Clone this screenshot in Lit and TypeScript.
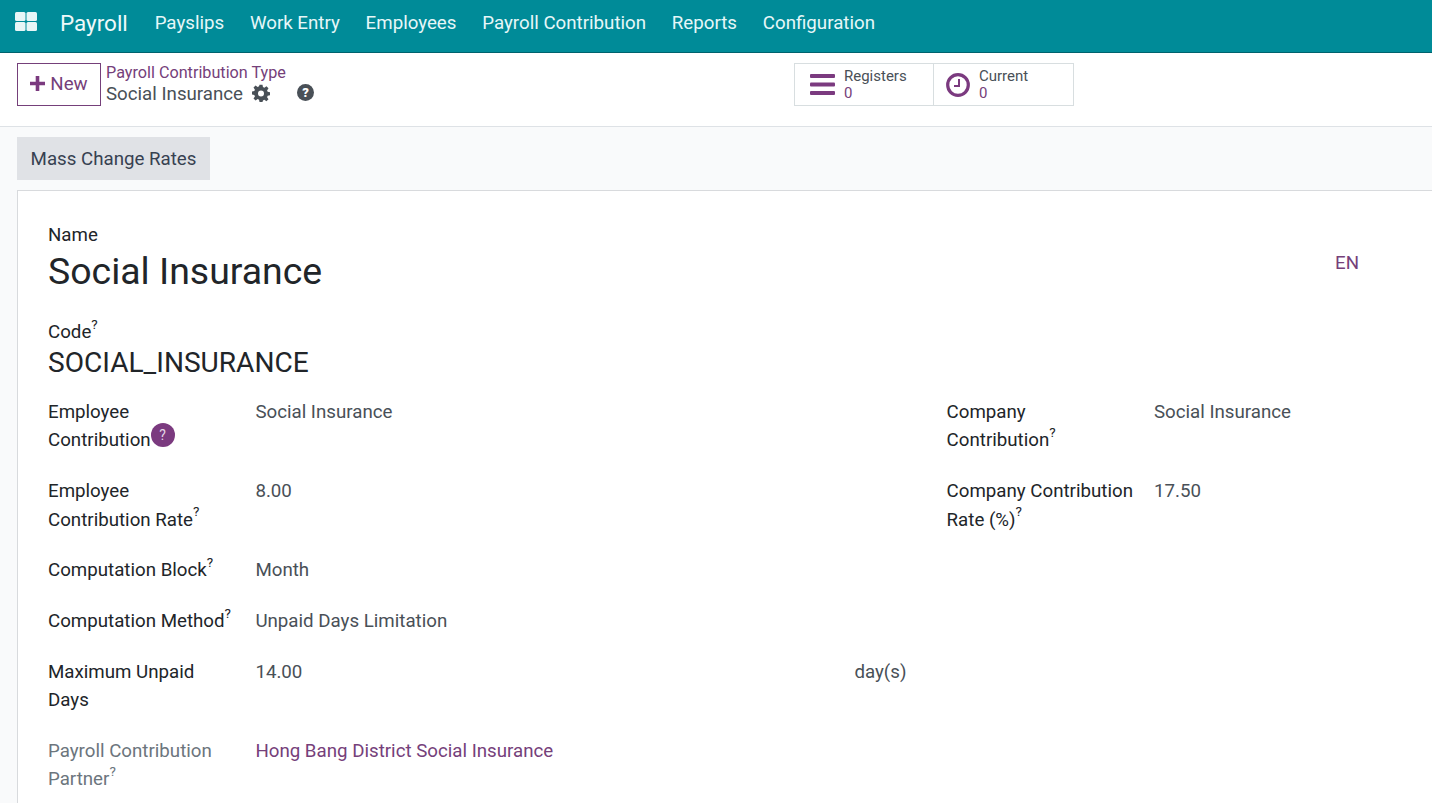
import { LitElement, html, css } from "lit";
import { customElement } from "lit/decorators.js";

const sup = html`<sup class="q">?</sup>`;

@customElement("app-root")
export class AppRoot extends LitElement {
  static styles = css`
    :host { display: block; width: 1432px; height: 803px; overflow: hidden; background: #f9fafb; font-family: Roboto, sans-serif; font-size: 18.72px; color: #212529; }
    * { box-sizing: border-box; }
    .nav { height: 53px; background: #008b98; border-bottom: 1px solid #00626d; display: flex; align-items: flex-start; color: #e6f7f8; }
    .apps { margin: 12px 0 0 15px; width: 22px; height: 19px; }
    .brand { margin: 8px 0 0 23px; font-size: 22.46px; line-height: 30px; color: #eef9fa; }
    .menu { display: flex; gap: 25.8px; margin: 9px 0 0 26.800px; line-height: 28px; }
    .cp { height: 74px; background: #fff; border-bottom: 1px solid #dee2e6; display: flex; padding: 10px 0 0 17px; }
    .new { width: 84px; height: 43px; border: 1px solid #75407a; color: #75407a; display: flex; align-items: center; justify-content: center; gap: 5px; padding-bottom: 2px; }
    .bc { margin-left: 5px; width: 184px; }
    .bc .t { font-size: 16.2px; color: #75407a; line-height: 18px; margin-top: 1px; white-space: nowrap; }
    .bc .c { display: flex; align-items: center; line-height: 24px; color: #495057; white-space: nowrap; }
    .bc svg { flex: none; }
    .gear { margin: 0 0 2px 9px; }
    .help { margin: 0 0 4px 27px; }
    .stats { display: flex; margin-left: 504px; height: 43px; }
    .stat { width: 140px; height: 43px; border: 1px solid #d8dee0; display: flex; padding-left: 15px; align-items: center; gap: 9px; }
    .stat + .stat { border-left: 0; padding-left: 12px; }
    .stat .n { font-size: 15px; line-height: 17px; color: #495057; }
    .stat .v { font-size: 15px; line-height: 17px; color: #75407a; }
    .actions { padding: 10px 0 10px 17px; height: 63px; }
    .mass { display: inline-flex; width: 193px; height: 43px; align-items: center; justify-content: center; background: #e0e2e6; color: #374151; }
    .sheet { margin-left: 17px; height: 700px; background: #fff; border: 1px solid #d8dadd; border-right: 0; padding: 30px 0 0 30px; position: relative; }
    .lab { line-height: 28px; }
    .name { font-size: 37.44px; line-height: 45px; }
    .en { position: absolute; right: 73px; top: 58px; color: #75407a; line-height: 28px; }
    .codelab { margin-top: 24px; line-height: 28px; }
    .code { font-size: 28.08px; line-height: 34px; }
    .q { font-size: 13.5px; line-height: 0; vertical-align: baseline; position: relative; top: -9.5px; }
    .grid { display: grid; grid-template-columns: 898.6px 1fr; margin-top: 18.2px; }
    .col { display: flex; flex-direction: column; gap: 22.5px; }
    .row { display: grid; grid-template-columns: 207.4px 1fr; line-height: 28.3px; }
    .v2 { color: #495057; display: flex; justify-content: space-between; width: 651px; }
    .muted { color: #6c757d; }
    .link { color: #75407a; }
    .badge { display: inline-flex; width: 24px; height: 24px; border-radius: 50%; background: #7b3a7f; color: #e4d6e6; font-size: 14px; align-items: center; justify-content: center; position: relative; top: -6.5px; line-height: 1; }
  `;

  render() {
    return html`
      <div class="nav">
        <svg class="apps" viewBox="0 0 22 19"><g fill="#e8f6f7"><rect x="0" y="0" width="10.500" height="9" rx="1.500"/><rect x="11.500" y="0" width="10.500" height="9" rx="1.500"/><rect x="0" y="10" width="10.500" height="9" rx="1.500"/><rect x="11.500" y="10" width="10.500" height="9" rx="1.500"/></g></svg>
        <div class="brand">Payroll</div>
        <div class="menu"><span>Payslips</span><span>Work Entry</span><span>Employees</span><span>Payroll Contribution</span><span>Reports</span><span>Configuration</span></div>
      </div>
      <div class="cp">
        <div class="new"><svg width="15" height="15" viewBox="0 0 15 15"><path d="M5.700 0h3.600v5.700H15v3.600H9.300V15H5.700V9.300H0V5.700h5.700z" fill="#7b3a7f"/></svg>New</div>
        <div class="bc">
          <div class="t">Payroll Contribution Type</div>
          <div class="c">Social Insurance
            <svg class="gear" width="18" height="18" viewBox="0 0 24 24"><path fill="#495057" fill-rule="evenodd" d="M10 1h4l.6 3.100 1.900.8L19.200 3 22 5.800l-1.900 2.700.8 1.900L24 11v4l-3.100.6-.8 1.900 1.900 2.700-2.800 2.800-2.700-1.900-1.900.8L14 24h-4l-.6-3.100-1.900-.8L4.800 22 2 19.200l1.900-2.700-.8-1.900L0 14v-4l3.100-.6.8-1.900L2 4.800 4.800 2l2.700 1.900 1.900-.8zM12 8.500a4 4 0 1 0 0 8 4 4 0 0 0 0-8z"/></svg>
            <svg class="help" width="17" height="17" viewBox="0 0 17 17"><circle cx="8.500" cy="8.500" r="8.500" fill="#495057"/><text x="8.500" y="13" text-anchor="middle" font-family="Roboto" font-weight="900" font-size="13" fill="#fff">?</text></svg>
          </div>
        </div>
        <div class="stats">
          <div class="stat"><svg width="25" height="21" viewBox="0 0 25 21"><g fill="#7b3a7f"><rect width="25" height="4" y="0" rx="1"/><rect width="25" height="4" y="8.500" rx="1"/><rect width="25" height="4" y="17" rx="1"/></g></svg><div><div class="n">Registers</div><div class="v">0</div></div></div>
          <div class="stat"><svg width="24" height="24" viewBox="0 0 24 24"><circle cx="12" cy="12" r="10.300" fill="none" stroke="#7b3a7f" stroke-width="3.200"/><path d="M13 6v7H8" fill="none" stroke="#7b3a7f" stroke-width="2"/></svg><div><div class="n">Current</div><div class="v">0</div></div></div>
        </div>
      </div>
      <div class="actions"><div class="mass">Mass Change Rates</div></div>
      <div class="sheet">
        <div class="lab">Name</div>
        <div class="name">Social Insurance</div>
        <div class="en">EN</div>
        <div class="codelab">Code${sup}</div>
        <div class="code">SOCIAL_INSURANCE</div>
        <div class="grid">
          <div class="col">
            <div class="row"><div>Employee<br>Contribution<span class="badge">?</span></div><div class="v2">Social Insurance</div></div>
            <div class="row"><div>Employee<br>Contribution Rate${sup}</div><div class="v2">8.00</div></div>
            <div class="row"><div>Computation Block${sup}</div><div class="v2">Month</div></div>
            <div class="row"><div>Computation Method${sup}</div><div class="v2">Unpaid Days Limitation</div></div>
            <div class="row"><div>Maximum Unpaid<br>Days</div><div class="v2"><span>14.00</span><span>day(s)</span></div></div>
            <div class="row"><div class="muted">Payroll Contribution<br>Partner${sup}</div><div class="v2 link">Hong Bang District Social Insurance</div></div>
          </div>
          <div class="col">
            <div class="row"><div>Company<br>Contribution${sup}</div><div class="v2">Social Insurance</div></div>
            <div class="row"><div>Company Contribution<br>Rate (%)${sup}</div><div class="v2">17.50</div></div>
          </div>
        </div>
      </div>
    `;
  }
}
